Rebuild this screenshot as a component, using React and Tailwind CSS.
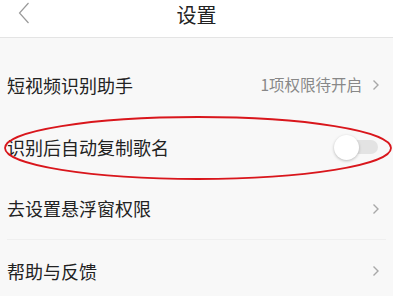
import React from 'react';

const Chevron = () => (
  <svg width="8" height="12" viewBox="0 0 8 12" className="shrink-0">
    <path d="M1.5 1.5 L6 6 L1.5 10.5" fill="none" stroke="#a8a8a8" strokeWidth="1.4" />
  </svg>
);

function Row({ label, right, children }) {
  return (
    <div className="flex items-center h-[62px] mx-[7px]">
      <span className="flex-1 text-[18px] text-[#222]">{label}</span>
      {right && <span className="text-[15.5px] text-[#888] mr-[10px]">{right}</span>}
      {children}
    </div>
  );
}

export default function App() {
  return (
    <div
      className="w-[393px] h-[296px] overflow-hidden bg-[#f8f8f8] relative"
      style={{ fontFamily: '"Noto Sans CJK SC", "Liberation Sans", sans-serif' }}
    >
      <div className="h-[38px] bg-white border-b border-[#e4e4e4] flex items-center justify-center relative">
        <svg width="12" height="22" viewBox="0 0 12 22" className="absolute left-[18px] top-[2px]">
          <path d="M10.5 1 L1.5 11 L10.5 21" fill="none" stroke="#9a9a9a" strokeWidth="1.2" />
        </svg>
        <span className="text-[20px] text-[#222] -mt-[8px]">设置</span>
      </div>
      <div className="pt-[16px]">
        <Row label="短视频识别助手" right="1项权限待开启">
          <span className="mr-[6px]"><Chevron /></span>
        </Row>
        <Row label="识别后自动复制歌名">
          <div className="relative w-[44px] h-[24px] mr-[8px] flex items-center">
            <div className="absolute left-[4px] right-0 h-[14px] rounded-full bg-[#e3e3e3]" />
            <div className="absolute left-0 w-[25px] h-[25px] rounded-full bg-white shadow-[0_1px_3px_rgba(0,0,0,0.25)]" />
          </div>
        </Row>
        <div className="border-b border-[#efefef] mx-[7px]">
          <div className="flex items-center h-[61px]">
            <span className="flex-1 text-[18px] text-[#222]">去设置悬浮窗权限</span>
            <span className="mr-[6px]"><Chevron /></span>
          </div>
        </div>
        <Row label="帮助与反馈">
          <span className="mr-[6px]"><Chevron /></span>
        </Row>
      </div>
      <svg className="absolute left-0 top-0 pointer-events-none" width="393" height="296">
        <ellipse cx="198" cy="148" rx="193" ry="31" fill="none" stroke="#d9161c" strokeWidth="1.8" />
      </svg>
    </div>
  );
}
